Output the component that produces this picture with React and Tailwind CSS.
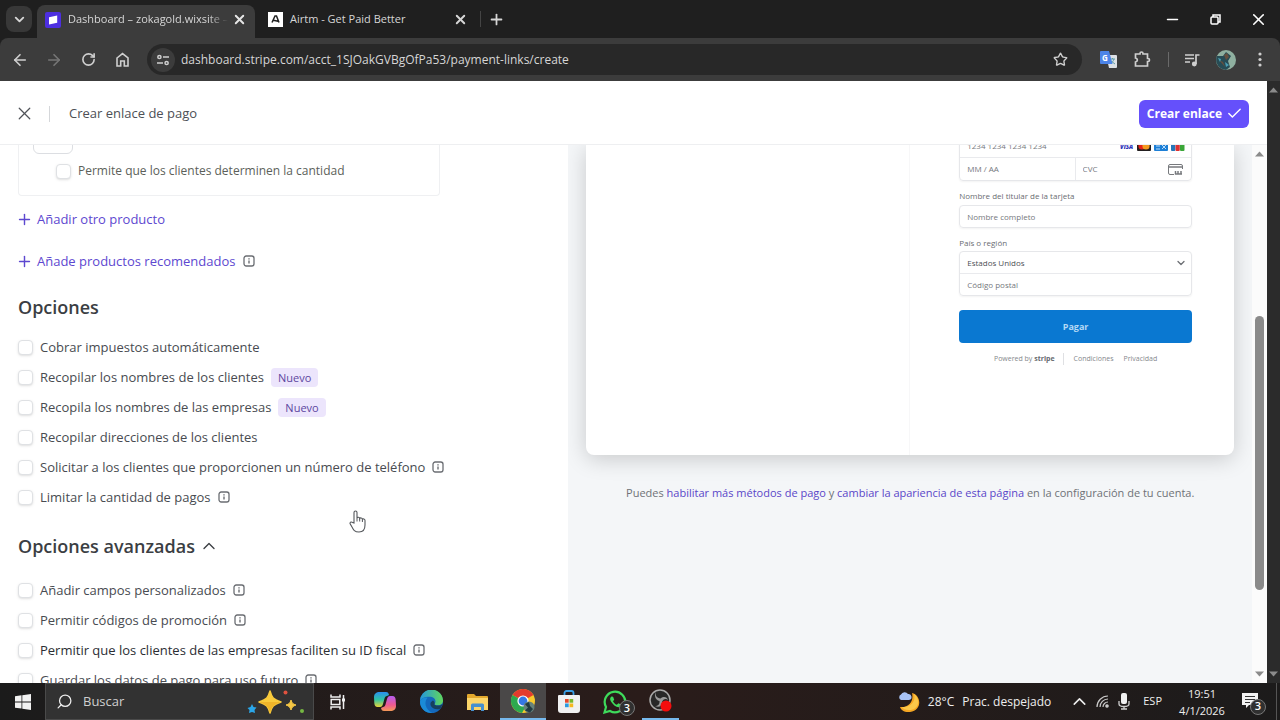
import React from 'react';
import {
  ArrowLeft,
  ArrowRight,
  Check,
  ChevronDown,
  ChevronUp,
  Minus,
  Plus,
  RotateCw,
  Search,
  Star,
  X,
} from 'lucide-react';

const options = [
  { id: 'tax', label: 'Cobrar impuestos automáticamente' },
  { id: 'names', label: 'Recopilar los nombres de los clientes', isNew: true },
  { id: 'companies', label: 'Recopila los nombres de las empresas', isNew: true },
  { id: 'addresses', label: 'Recopilar direcciones de los clientes' },
  { id: 'phone', label: 'Solicitar a los clientes que proporcionen un número de teléfono', info: true },
  { id: 'limit', label: 'Limitar la cantidad de pagos', info: true },
];

const advancedOptions = [
  { id: 'custom', label: 'Añadir campos personalizados', info: true },
  { id: 'promo', label: 'Permitir códigos de promoción', info: true },
  { id: 'taxid', label: 'Permitir que los clientes de las empresas faciliten su ID fiscal', info: true, dark: true },
  { id: 'save', label: 'Guardar los datos de pago para uso futuro', info: true },
];

function InfoIcon() {
  return (
    <svg className="size-3 shrink-0 text-[#6b6e73]" viewBox="0 0 12 12" fill="none" stroke="currentColor">
      <rect x="1" y="1" width="10" height="10" rx="2.2" strokeWidth="1.3" />
      <path d="M6 5.4v3.2M6 3.2v1.2" strokeWidth="1.4" />
    </svg>
  );
}

function Checkbox({ id }) {
  return (
    <input
      id={id}
      type="checkbox"
      className="size-[15px] shrink-0 appearance-none rounded border border-[#dfe1e4] bg-white shadow-sm"
    />
  );
}

function OptionRow({ option }) {
  return (
    <li className="flex h-[30px] items-center gap-[7px]">
      <Checkbox id={option.id} />
      <label
        htmlFor={option.id}
        className={option.dark ? 'font-medium text-[#2b2e33]' : 'font-medium text-[#484b51]'}
      >
        {option.label}
      </label>
      {option.isNew && (
        <span className="rounded bg-[#ece5fc] px-[7px] text-[11px] leading-[19px] text-[#5c45a0]">Nuevo</span>
      )}
      {option.info && (
        <button aria-label="Más información">
          <InfoIcon />
        </button>
      )}
    </li>
  );
}

function BrowserTabs() {
  return (
    <div className="flex h-[38px] shrink-0 items-center bg-[#1f1f1f] text-[11px] text-[#d6d6d6]">
      <button aria-label="Buscar pestañas" className="ml-1.5 flex size-[26px] items-center justify-center rounded-lg bg-[#383838]">
        <ChevronDown size={15} strokeWidth={3} />
      </button>
      <div className="ml-[5px] flex h-[33px] w-[218px] items-center self-end rounded-t-lg bg-[#3c3c3c] px-2 pb-1">
        <svg className="size-4 shrink-0" viewBox="0 0 16 16">
          <rect width="16" height="16" rx="2" fill="#4d2fe0" />
          <path d="M4 5.2 12.2 3.6v7.2L4 12.4z" fill="#fff" />
        </svg>
        <span className="ml-[7px] whitespace-nowrap [mask-image:linear-gradient(to_right,black_88%,transparent)]">
          Dashboard – zokagold.wixsite –
        </span>
        <button aria-label="Cerrar pestaña" className="ml-auto text-[#e6e6e6]">
          <X size={15} strokeWidth={3} />
        </button>
      </div>
      <div className="ml-[5px] flex w-[216px] items-center px-2">
        <svg className="size-[15px] shrink-0" viewBox="0 0 15 15">
          <rect width="15" height="15" fill="#fff" />
          <path d="M4 10.5 7 4h1.5l2.500 6.500M5.500 8.300l4.500 1" fill="none" stroke="#222" strokeWidth="1.500" />
        </svg>
        <span className="ml-[7px]">Airtm - Get Paid Better</span>
        <button aria-label="Cerrar pestaña" className="ml-auto">
          <X size={15} strokeWidth={3} />
        </button>
      </div>
      <div className="ml-1 h-4 w-px bg-[#444]" />
      <button aria-label="Nueva pestaña" className="ml-[7px]">
        <Plus size={17} strokeWidth={2.500} />
      </button>
      <div className="ml-auto flex items-center text-white">
        <button aria-label="Minimizar" className="flex w-[43px] justify-center">
          <Minus size={17} strokeWidth={2.200} />
        </button>
        <button aria-label="Restaurar" className="flex w-[43px] justify-center">
          <svg className="size-[11px]" viewBox="0 0 11 11" fill="none" stroke="currentColor" strokeWidth="1.500">
            <rect x="1" y="3" width="7" height="7" rx="1" />
            <path d="M3 3V1h7v7H8" />
          </svg>
        </button>
        <button aria-label="Cerrar" className="flex w-[43px] justify-center">
          <X size={19} strokeWidth={2} />
        </button>
      </div>
    </div>
  );
}

function BrowserToolbar() {
  return (
    <div className="shrink-0 bg-[#1f1f1f]">
      <div className="flex h-[43px] items-center rounded-t-lg bg-[#3c3c3c] text-[#cfcfcf]">
        <div className="flex items-center pl-[3px]">
          <button aria-label="Atrás" className="flex w-[34px] justify-center">
            <ArrowLeft size={18} strokeWidth={2.200} />
          </button>
          <button aria-label="Adelante" className="flex w-[34px] justify-center text-[#767676]">
            <ArrowRight size={18} strokeWidth={2.200} />
          </button>
          <button aria-label="Recargar" className="flex w-[34px] justify-center">
            <RotateCw size={15} strokeWidth={2.600} />
          </button>
          <button aria-label="Inicio" className="flex w-[34px] justify-center">
            <svg className="size-[15px]" viewBox="0 0 15 15" fill="none" stroke="currentColor" strokeWidth="1.600">
              <path d="M2 6 7.500 1.600 13 6v8H9.300V9H5.700v5H2z" />
            </svg>
          </button>
        </div>
        <div className="ml-2 flex h-[31px] flex-1 items-center rounded-full bg-[#282828] pr-[14px] pl-1">
          <span className="flex size-6 shrink-0 items-center justify-center rounded-full bg-[#3c3c3c]">
            <svg className="size-3" viewBox="0 0 12 12" fill="none" stroke="currentColor" strokeWidth="1.500">
              <circle cx="2.400" cy="3" r="1.600" />
              <path d="M6 3h6M0 9h6" />
              <circle cx="9.600" cy="9" r="1.600" />
            </svg>
          </span>
          <input
            aria-label="Dirección"
            readOnly
            value="dashboard.stripe.com/acct_1SJOakGVBgOfPa53/payment-links/create"
            className="ml-[6px] min-w-0 flex-1 bg-transparent text-[12px] font-medium text-[#d6d6d6] outline-none"
          />
          <button aria-label="Marcar página">
            <Star size={15} strokeWidth={2.200} />
          </button>
        </div>
        <div className="ml-[18px] flex items-center">
          <button aria-label="Traducir" className="w-[34px]">
            <svg className="size-[17px]" viewBox="0 0 17 17">
              <path d="M6 4h10a1 1 0 0 1 1 1v11a1 1 0 0 1-1 1H9z" fill="#dde1e6" />
              <path d="M10 8h5M12.500 7v1M14 8c-.5 2-2 3.500-3 4M11 10l4 3" stroke="#5f9ea8" fill="none" />
              <path d="M1 0h8l3.500 13H1a1 1 0 0 1-1-1V1a1 1 0 0 1 1-1z" fill="#4c84e8" />
              <text x="2" y="9.500" fontSize="8" fontWeight="700" fill="#fff">G</text>
            </svg>
          </button>
          <button aria-label="Extensiones" className="w-[34px]">
            <svg className="size-[17px]" viewBox="0 0 17 17" fill="none" stroke="currentColor" strokeWidth="1.700">
              <path d="M1.500 3H6V2.500a1.500 1.500 0 0 1 3 0V3h4.500v4.500h.5a1.500 1.500 0 0 1 0 3h-.5V15h-12v-4C4 10.500 4 7.500 1.500 7z" />
            </svg>
          </button>
          <div className="h-[15px] w-px bg-[#6a6a6a]" />
          <button aria-label="Controles multimedia" className="ml-[15px] w-[32px]">
            <svg className="size-[16px]" viewBox="0 0 16 16" fill="none" stroke="currentColor" strokeWidth="1.700">
              <path d="M1 3h9M1 6.500h9M1 10h5M12 12V3h3.500" />
              <circle cx="10.300" cy="12" r="1.600" fill="currentColor" />
            </svg>
          </button>
          <button aria-label="Perfil" className="w-[32px]">
            <svg className="size-5" viewBox="0 0 20 20">
              <circle cx="10" cy="10" r="10" fill="#8fb0a0" />
              <path d="M1 6a10 10 0 0 0 4 12.500L10 20l4-3-2-6 3-5-5-4-3 4z" fill="#274c55" />
              <path d="M3 10l4 2 2 5M8 5l3-2 2 4-3 3z" fill="#65503f" />
              <path d="M2 8l3 1-1 3zM9 12l4 3-3 2z" fill="#4aa0b5" />
            </svg>
          </button>
          <button aria-label="Más opciones" className="mr-2 flex w-6 justify-center">
            <svg className="h-[15px] w-1" viewBox="0 0 4 15" fill="currentColor">
              <circle cx="2" cy="2" r="1.600" />
              <circle cx="2" cy="7.500" r="1.600" />
              <circle cx="2" cy="13" r="1.600" />
            </svg>
          </button>
        </div>
      </div>
    </div>
  );
}

function PageHeader() {
  return (
    <header className="z-10 flex h-16 shrink-0 items-center border-b border-[#eeeff1] bg-white pt-0.5 pr-[18px] pl-[14px]">
      <button aria-label="Cerrar" className="text-[#505359]">
        <X size={21} strokeWidth={1.400} />
      </button>
      <div className="ml-[14px] h-4 w-px bg-[#d5d7da]" />
      <h1 className="ml-[19px] text-[13px] font-medium text-[#4d5056]">Crear enlace de pago</h1>
      <button className="ml-auto flex h-7 items-center gap-1 rounded-md bg-[#6550fb] pr-[6px] pl-2 text-[12px] font-bold text-white">
        Crear enlace
        <Check size={17} strokeWidth={2} />
      </button>
    </header>
  );
}

function LinkSettings() {
  return (
    <div className="h-full w-[45.4%] shrink-0 overflow-hidden bg-white pl-[18px] text-[13px] leading-5">
      <div className="flow-root h-[51px] max-w-[422px] rounded-b border border-t-0 border-[#eff0f2]">
        <input
          aria-label="Cantidad"
          className="-mt-5 ml-[14px] block h-[29px] w-10 rounded-md border border-[#dcdee2] bg-white"
        />
        <div className="mt-[7px] ml-[37px] flex items-center gap-[7px]">
          <Checkbox id="adjustable" />
          <label htmlFor="adjustable" className="text-[12px] text-[#5c5f5a]">Permite que los clientes determinen la cantidad</label>
        </div>
      </div>

      <button className="mt-[13px] -ml-0.5 flex items-center gap-1 font-medium text-[#5d48d0]">
        <Plus size={17} strokeWidth={2} />
        Añadir otro producto
      </button>
      <div className="mt-[22px] -ml-0.5 flex items-center gap-2">
        <button className="flex items-center gap-1 font-medium text-[#5d48d0]">
          <Plus size={17} strokeWidth={2} />
          Añade productos recomendados
        </button>
        <InfoIcon />
      </div>

      <h2 className="mt-[22px] text-[18px] leading-7 font-semibold text-[#3b3e43]">Opciones</h2>
      <ul className="mt-[11px]">
        {options.map((option) => (
          <OptionRow key={option.id} option={option} />
        ))}
      </ul>

      <h2 className="mt-5 text-[18px] leading-7 font-semibold text-[#3b3e43]">
        <button className="flex items-center gap-1">
          Opciones avanzadas
          <ChevronUp size={20} strokeWidth={1.600} />
        </button>
      </h2>
      <ul className="mt-[15px]">
        {advancedOptions.map((option) => (
          <OptionRow key={option.id} option={option} />
        ))}
      </ul>
    </div>
  );
}

function CardBrands() {
  return (
    <svg className="h-[10px] w-[65px] shrink-0" viewBox="0 0 65 10">
      <text x="0" y="8" fontSize="6" fontWeight="800" fontStyle="italic" fill="#2a32b8">VISA</text>
      <rect x="17" width="14" height="10" rx="1" fill="#231f20" />
      <circle cx="22" cy="5" r="3.600" fill="#e2231a" />
      <circle cx="26" cy="5" r="3.600" fill="#f59b1f" />
      <rect x="34" width="14" height="10" rx="1" fill="#1d7fd6" />
      <path d="M36 8h4M42 8l4-4M42 4l4 4M36 5h4" fill="none" stroke="#b9dcfa" />
      <rect x="51" width="4.300" height="10" rx="1" fill="#2676b8" />
      <rect x="55.500" width="4.300" height="10" rx="1" fill="#dc3131" />
      <rect x="60" width="4.500" height="10" rx="1" fill="#3aa638" />
    </svg>
  );
}

function CheckoutPreview() {
  return (
    <div className="h-full min-w-0 flex-1 overflow-hidden bg-[#f4f6f8] px-[18px]">
      <div className="flex h-[310px] rounded-b-lg bg-white shadow-[0_4px_22px_rgba(0,0,0,0.18)]">
        <div className="w-1/2 border-r border-[#f7f7f8]" />
        <form className="w-1/2 pr-[42px] pl-[49px] text-[8px] text-[#6c6f74]">
          <div className="-mt-[11px] rounded border border-[#e6e7ea] shadow-xs">
            <div className="flex h-[23px] items-center border-b border-[#e9eaed] pr-[6px] pl-[7px]">
              <input aria-label="Número de tarjeta" placeholder="1234 1234 1234 1234" className="min-w-0 flex-1 outline-none placeholder:text-[#75787d]" />
              <CardBrands />
            </div>
            <div className="flex h-[22px]">
              <input aria-label="Caducidad" placeholder="MM / AA" className="w-1/2 border-r border-[#e9eaed] pl-[7px] outline-none placeholder:text-[#75787d]" />
              <div className="flex w-1/2 items-center pr-2 pl-[7px]">
                <input aria-label="CVC" placeholder="CVC" className="min-w-0 flex-1 outline-none placeholder:text-[#75787d]" />
                <svg className="h-[11px] w-[15px] shrink-0" viewBox="0 0 15 11" fill="none" stroke="#77797d">
                  <path d="M6 10.500H2A1.500 1.500 0 0 1 .5 9V2A1.500 1.500 0 0 1 2 .5h11A1.500 1.500 0 0 1 14.500 2v3" />
                  <path d="M1 3h13" strokeWidth="1.500" />
                  <path d="M7.500 7v3.500M10 7v3.500M13 7v3.500M7 10h7" strokeWidth="1.500" />
                </svg>
              </div>
            </div>
          </div>

          <label htmlFor="holder" className="mt-[9px] block leading-3 font-medium text-[#6a6d72]">
            Nombre del titular de la tarjeta
          </label>
          <input
            id="holder"
            placeholder="Nombre completo"
            className="mt-[3px] block h-[23px] w-full rounded border border-[#e6e7ea] px-[7px] shadow-xs outline-none placeholder:text-[#75787d]"
          />

          <label htmlFor="country" className="mt-[9px] block leading-3 font-medium text-[#6a6d72]">
            País o región
          </label>
          <div className="mt-[2px] rounded border border-[#e6e7ea] shadow-xs">
            <div className="flex h-[22px] items-center border-b border-[#e9eaed] pr-[4px] pl-[7px]">
              <select id="country" className="min-w-0 flex-1 appearance-none text-[#4d5055] outline-none">
                <option>Estados Unidos</option>
              </select>
              <ChevronDown size={12} strokeWidth={2.600} />
            </div>
            <input aria-label="Código postal" placeholder="Código postal" className="block h-[21px] w-full px-[7px] outline-none placeholder:text-[#75787d]" />
          </div>

          <button type="button" className="mt-[14px] block h-[33px] w-full rounded bg-[#0a78d1] text-[9px] font-bold text-[#b5d9f5]">
            Pagar
          </button>

          <div className="mt-[10px] flex items-center justify-center text-[7px] leading-3 text-[#85888d]">
            <span>
              Powered by <b className="text-[#686b70]">stripe</b>
            </span>
            <span className="ml-2 h-3 w-px bg-[#dfe0e3]" />
            <a href="#terms" className="ml-[10px]">Condiciones</a>
            <a href="#privacy" className="ml-[10px]">Privacidad</a>
          </div>
        </form>
      </div>

      <p className="mt-[28px] text-center text-[11px] leading-5 whitespace-nowrap text-[#6f7277]">
        Puedes <a href="#methods" className="font-medium text-[#5a46c8]">habilitar más métodos de pago</a> y{' '}
        <a href="#branding" className="font-medium text-[#5a46c8]">cambiar la apariencia de esta página</a> en la
        configuración de tu cuenta.
      </p>
    </div>
  );
}

function ScrollArrow({ down }) {
  return (
    <svg className="h-[6px] w-[9px] shrink-0" viewBox="0 0 9 6" fill="#8b8b8b">
      <path d={down ? 'M0 .5h9L4.500 5.500z' : 'M0 5.500h9L4.500 .5z'} />
    </svg>
  );
}

function TaskButton({ label, className = 'w-[46px]', children }) {
  return (
    <button aria-label={label} className={`flex h-full items-center justify-center ${className}`}>
      {children}
    </button>
  );
}

function Taskbar() {
  return (
    <footer className="flex h-[37px] shrink-0 items-center bg-linear-to-r from-[#1b1b1b] via-[#2a1c1a] via-50% to-[#1c1b1b] text-[#eeeeee]">
      <TaskButton label="Inicio" className="w-[45px]">
        <svg className="size-4" viewBox="0 0 16 16" fill="#f2f2f2">
          <path d="M0 2.200 6.500 1.300v6.200H0zM7.300 1.200 16 0v7.500H7.300zM0 8.400h6.500v6.200L0 13.700zM7.300 8.400H16V16l-8.700-1.200z" />
        </svg>
      </TaskButton>
      <div className="flex h-full w-[269px] items-center border border-[#4a4a4a] bg-[#323232] pr-2 pl-[10px]">
        <Search size={17} strokeWidth={1.800} className="-scale-x-100" />
        <input
          aria-label="Buscar"
          placeholder="Buscar"
          className="ml-[10px] min-w-0 flex-1 text-[13px] outline-none placeholder:text-[#cfcfcf]"
        />
        <svg className="h-6 w-[58px] shrink-0" viewBox="0 0 58 24">
          <path d="M23 1c2 7 3 8 11 11-8 3-9 4-11 11-2-7-3-8-11-11 8-3 9-4 11-11z" fill="#f9cb3c" stroke="#f9cb3c" strokeWidth="1.500" strokeLinejoin="round" />
          <path d="M23 12h11c-8 3-9 4-11 11-2-7-3-8-11-11z" fill="#f0b52a" />
          <path d="M44 10c1 3.500 2 4 5 5-3 1-4 2-5 5-1-3-2-4-5-5 3-1 4-1.500 5-5z" fill="#f6c744" stroke="#f6c744" />
          <path d="M5 14l1.500 3 3 .5-2 2.500.5 3-3-1-3 1 .5-3-2-2 3-1z" fill="#2ba6e8" />
          <circle cx="38.500" cy="2.500" r="2" fill="#e0523f" />
          <circle cx="55" cy="21" r="2" fill="#75b843" />
        </svg>
      </div>
      <TaskButton label="Vista de tareas" className="w-12">
        <svg className="size-4" viewBox="0 0 16 16" fill="none" stroke="#efefef" strokeWidth="1.500">
          <path d="M1 .5v2.500h9V.5M1 15.500V13h9v2.500M1.200 5.500h8.600v5H1.200zM13.500 1v14" />
          <path d="M12 6h3" strokeWidth="3" />
        </svg>
      </TaskButton>
      <TaskButton label="Copilot">
        <svg className="h-[21px] w-[22px]" viewBox="0 0 22 21">
          <defs>
            <linearGradient id="copA" x1="0" y1="0" x2="0" y2="1">
              <stop offset="0" stopColor="#2a8ff0" />
              <stop offset=".5" stopColor="#2fc3a4" />
              <stop offset="1" stopColor="#e8d438" />
            </linearGradient>
            <linearGradient id="copB" x1="0" y1="0" x2="0" y2="1">
              <stop offset="0" stopColor="#b45cf0" />
              <stop offset=".6" stopColor="#ee5a90" />
              <stop offset="1" stopColor="#f59a57" />
            </linearGradient>
          </defs>
          <path d="M6 1h6c2 0 2.500 1 3 3l-2 1c-1.500 0-2 1-2.500 2.500L9 13c-.5 2-1.500 3-3 3H3.500C1.500 16 .5 14.500.3 12L0 6c0-3 2-5 6-5z" fill="url(#copA)" />
          <path d="M16 20h-6c-2 0-2.500-1-3-3l2-1c1.500 0 2-1 2.500-2.500L13 8c.5-2 1.500-3 3-3h2.500c2 0 3 1.500 3.200 4l.3 6c0 3-2 5-6 5z" fill="url(#copB)" />
        </svg>
      </TaskButton>
      <TaskButton label="Edge">
        <svg className="size-[23px]" viewBox="0 0 24 24">
          <defs>
            <linearGradient id="edgeTop" x1="0" y1="0" x2="1" y2="0">
              <stop offset="0" stopColor="#2496dc" />
              <stop offset="1" stopColor="#61d75b" />
            </linearGradient>
          </defs>
          <circle cx="12" cy="12" r="12" fill="#1468bb" />
          <path d="M0 12a12 12 0 0 1 24-1c0 5-5 6-9 4 3-4 0-8-5-8C4 7 1 9 0 12z" fill="url(#edgeTop)" />
          <path d="M0 12c1-3 4-5 8-4-4 4-3 12 5 16C5 24 0 19 0 12z" fill="#1b8bd7" />
          <path d="M15 15c3 2 6 1.500 8.500-.5-.5 2-1.200 3.500-2.500 5-6 2-11-2-10-6 .3-1.200 1.500-1.500 2.500-2.500 1.500 1 2.200 2.500 1.500 4z" fill="#173f5f" />
        </svg>
      </TaskButton>
      <TaskButton label="Explorador de archivos">
        <svg className="h-[18px] w-[21px]" viewBox="0 0 21 18">
          <path d="M0 2a1 1 0 0 1 1-1h6l2 2h11a1 1 0 0 1 1 1v13H0z" fill="#e3a82d" />
          <path d="M0 5h21v12H0z" fill="#fbd569" />
          <path d="M4 18v-6a1.500 1.500 0 0 1 1.500-1.500h10A1.500 1.500 0 0 1 17 12v6h-3v-4H7v4z" fill="#4590cf" />
        </svg>
      </TaskButton>
      <TaskButton label="Chrome" className="w-[46px] border-b-2 border-[#76b9ed] bg-[#4a4848]">
        <svg className="size-6" viewBox="0 0 24 24">
          <circle cx="12" cy="12" r="12" fill="#f7c92c" />
          <path d="M12 12 1.600 6A12 12 0 0 1 22.400 6z" fill="#e33b2e" />
          <path d="M12 12 1.600 6A12 12 0 0 0 11 24l5-9z" fill="#2da94f" />
          <circle cx="12" cy="12" r="5.600" fill="#fff" />
          <circle cx="12" cy="12" r="4.400" fill="#3578e5" />
          <circle cx="18" cy="18" r="5.500" fill="#66827b" />
          <path d="M14 15l4-2 1 4 3 3-3 3.500-5-2 3-3z" fill="#223b42" />
        </svg>
      </TaskButton>
      <TaskButton label="Microsoft Store">
        <svg className="h-[23px] w-[22px]" viewBox="0 0 22 23">
          <path d="M6.500 6V3a2 2 0 0 1 2-2h5a2 2 0 0 1 2 2v3" fill="none" stroke="#3a9ee4" strokeWidth="1.800" />
          <path d="M0 6a1 1 0 0 1 1-1h20a1 1 0 0 1 1 1v14a3 3 0 0 1-3 3H3a3 3 0 0 1-3-3z" fill="#f1f1f1" />
          <path d="M7 9h3.700v3.700H7z" fill="#e74b2c" />
          <path d="M11.500 9h3.700v3.700h-3.700z" fill="#78b82a" />
          <path d="M7 13.500h3.700v3.700H7z" fill="#2b9ce0" />
          <path d="M11.500 13.500h3.700v3.700h-3.700z" fill="#f5b81d" />
        </svg>
      </TaskButton>
      <TaskButton label="WhatsApp" className="relative w-[46px]">
        <svg className="size-[24px]" viewBox="0 0 24 24">
          <path d="M1.500 22.500 3 17a10.300 10.300 0 1 1 4 4z" fill="none" stroke="#3edb5b" strokeWidth="2.200" />
          <path d="M8.500 6.500c-1.500 1-2 3 0 5.800s5.500 6 8.500 4.700c1.500-.8 1.500-2 .8-2.600l-2.300-1.200-1.700 1.600c-2-.8-3-2-3.800-3.600l1.200-1.500-1-2.700c-.3-.6-1-.7-1.700-.5z" fill="#3edb5b" />
        </svg>
        <span className="absolute right-[3px] bottom-1 flex size-4 items-center justify-center rounded-full border border-[#777] bg-[#303030] text-[11px] font-semibold text-white">
          3
        </span>
      </TaskButton>
      <TaskButton label="OBS Studio" className="ml-1 w-[37px] border-b-2 border-[#76b9ed]">
        <svg className="size-[23px]" viewBox="0 0 23 23">
          <circle cx="11" cy="11" r="10" fill="#282828" stroke="#a9a9a9" strokeWidth="1.500" />
          <path d="M7 3c-1 4 1 6 4.500 6.500C15 7 18 8 19 11c-2-2-5-1-6 2 0 4-3 6-7 4 3 0 5-2 4.500-5C6 11 5 6 7 3z" fill="#9a9a9a" />
          <circle cx="17" cy="17" r="5.500" fill="#f50d0d" />
        </svg>
      </TaskButton>

      <div className="ml-auto flex h-full items-center text-[12px] font-medium">
        <button className="flex items-center">
          <svg className="size-[22px]" viewBox="0 0 22 22">
            <path d="M14 2c9 2 11 17-2 19-6 .5-9-2-10-5 9 1 14-6 12-14z" fill="#f6a723" />
            <path d="M16 3c7 5 5 15-3 16-5 .5-8-1-9-3 10 1 14-7 12-13z" fill="#fac84a" />
            <path d="M3 9a3 3 0 0 1 0-5.500A4 4 0 0 1 10 3a3 3 0 0 1 1 6z" fill="#a8c2f4" />
          </svg>
          <span className="ml-2">28°C</span>
          <span className="ml-2">Prac. despejado</span>
        </button>
        <button aria-label="Mostrar iconos ocultos" className="ml-[18px]">
          <ChevronUp size={21} strokeWidth={1.800} />
        </button>
        <svg className="ml-[6px] size-[13px]" viewBox="0 0 13 13" fill="none" stroke="#cacaca" strokeWidth="1.200">
          <path d="M1 12A11 11 0 0 1 12 1M4 12a8 8 0 0 1 8-8M7 12a5 5 0 0 1 5-5" />
          <circle cx="11" cy="11" r="1.200" fill="#cacaca" />
        </svg>
        <svg className="ml-[9px] h-[17px] w-3" viewBox="0 0 12 17">
          <rect x="3" width="6" height="11" rx="2" fill="#f0f0f0" />
          <path d="M1 8v3c0 2 2 2.500 5 2.500s5-.5 5-2.500V8M6 13v3M3 16h6" fill="none" stroke="#d0d0d0" strokeWidth="1.300" />
        </svg>
        <span className="ml-[13px] text-[11px]">ESP</span>
        <div className="ml-[16px] w-12 text-center text-[11px] leading-[17px] font-normal whitespace-nowrap">
          <div>19:51</div>
          <div>4/1/2026</div>
        </div>
        <button aria-label="Notificaciones" className="relative mr-[10px] ml-[16px] flex h-[26px] w-6 items-start">
          <svg className="mt-1 h-[15px] w-4" viewBox="0 0 16 15">
            <path d="M0 0h16v12H7l-3 3v-3H0z" fill="#f2f2f2" />
            <path d="M3 3.500h10M3 6.500h10M3 9.500h5" stroke="#333" />
          </svg>
          <span className="absolute right-0 bottom-0 flex size-4 items-center justify-center rounded-full border border-[#777] bg-[#303030] text-[11px] font-semibold text-white">
            3
          </span>
        </button>
        <div className="mr-[3px] h-full w-px bg-[#555]" />
      </div>
    </footer>
  );
}

export default function App() {
  return (
    <div className="flex h-screen flex-col overflow-hidden bg-white font-['Open_Sans','Noto_Sans',sans-serif]">
      <BrowserTabs />
      <BrowserToolbar />

      <main className="relative flex min-h-0 flex-1">
        <div className="flex min-w-0 flex-1 flex-col">
          <PageHeader />
          <div className="flex min-h-0 flex-1">
            <div className="flex min-w-0 flex-1">
              <LinkSettings />
              <CheckoutPreview />
            </div>
            {/* Inner scrollbar */}
            <div className="flex w-[15px] flex-col items-center bg-[#fbfbfb] py-[6px]">
              <ScrollArrow />
              <div className="mt-[159px] h-[274px] w-[9px] rounded-full bg-[#8a8a8a]" />
              <div className="mt-auto flex">
                <ScrollArrow down />
              </div>
            </div>
          </div>
        </div>
        {/* Window scrollbar */}
        <div className="flex w-[13px] flex-col items-center justify-between bg-[#2b2b2b] py-[6px]">
          <ScrollArrow />
          <ScrollArrow down />
        </div>

        {/* Pointer */}
        <svg className="pointer-events-none absolute top-[429px] left-[349px] h-[23px] w-[17px]" viewBox="0 0 17 23">
          <path
            d="M5 13V2.500a1.500 1.500 0 0 1 3 0V8c.3-1 2.500-1 2.700.5.500-1 2.500-.8 2.700.8.500-.8 2.600-.5 2.600 1.200V15c0 4-2 7-6 7-4.500 0-5.500-2-7-5l-2-3.500c0-1.500 1.500-2 2.500-1z"
            fill="#fff"
            stroke="#55585c"
            strokeWidth="1.100"
          />
          <path d="M8 8v3.500M10.700 8.500v3M13.400 9.500v2.500" stroke="#55585c" fill="none" />
        </svg>
      </main>

      <Taskbar />
    </div>
  );
}
